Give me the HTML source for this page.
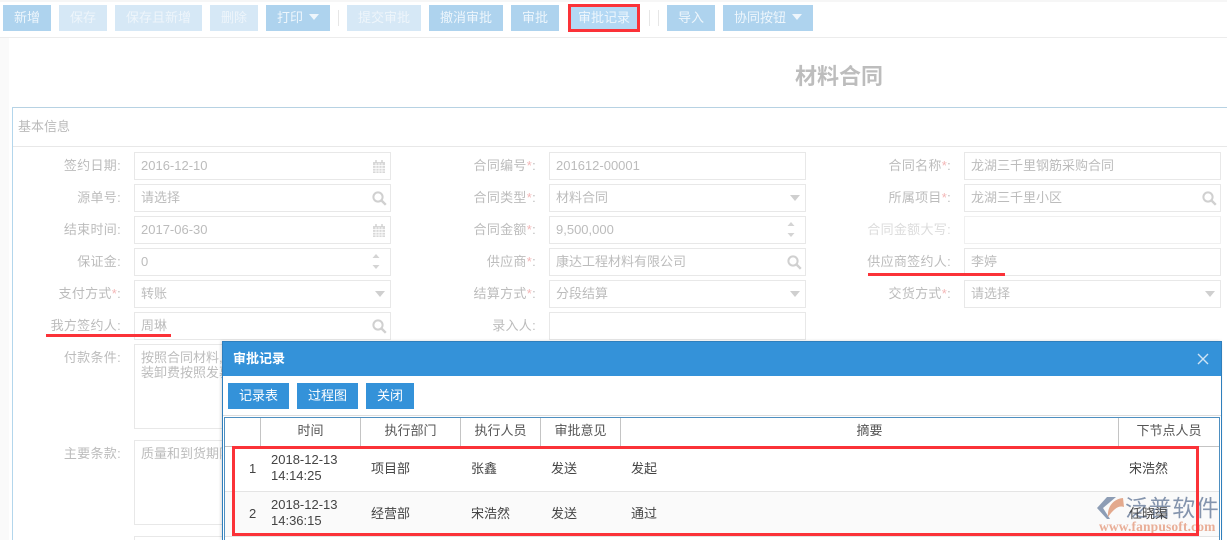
<!DOCTYPE html>
<html lang="zh"><head><meta charset="utf-8"><title>材料合同</title>
<style>
*{box-sizing:border-box;margin:0;padding:0}
html,body{width:1227px;height:540px;overflow:hidden;background:#fff}
body{position:relative;font-family:"Liberation Sans","Noto Sans CJK SC",sans-serif;font-size:13px;color:#bbb}
.a{position:absolute}
.b{position:absolute;top:5px;height:26px;line-height:26px;text-align:center;color:#eef6fc;background:#aed3ee;white-space:nowrap}
.l{background:#d6e8f6;color:#eef5fb}
.car{display:inline-block;width:0;height:0;border:5.5px solid transparent;border-top:6px solid #eef6fc;border-bottom:0;margin-left:6px;vertical-align:2px}
.sep{position:absolute;top:10px;width:1px;height:16px;background:#e6e6e6}
.lb{position:absolute;height:28px;line-height:27px;text-align:right;width:110px;color:#bcbcbc;white-space:nowrap;letter-spacing:.3px}
.lb i{font-style:normal;color:#f3b5b5}
.in{position:absolute;width:257px;height:28px;border:1px solid #e8e8e8;line-height:25px;padding-left:6px;color:#bcbcbc;background:#fff;white-space:nowrap;overflow:hidden}
.ta{line-height:15px;padding-top:5px;white-space:pre}
svg{position:absolute}
.db{position:absolute;top:383px;height:26px;line-height:26px;text-align:center;background:#3492d9;color:#fff}
.th{position:absolute;top:418px;height:28px;line-height:26px;text-align:center;color:#555;border-right:1px solid #c4c4c4;white-space:nowrap}
.td{position:absolute;color:#444;white-space:nowrap}
.r{position:absolute;background:#fb3238}
</style></head><body>
<div class="a" style="left:0;top:0;width:1227px;height:2px;background:#f6f6f6"></div>
<div class="a" style="left:0;top:37px;width:1227px;height:1px;background:#ececec"></div>
<div class="a" style="left:0;top:38px;width:9px;height:502px;background:#fafafa"></div>

<div class="b" style="left:3px;width:48px">新增</div>
<div class="b l" style="left:59px;width:48px">保存</div>
<div class="b l" style="left:115px;width:87px">保存且新增</div>
<div class="b l" style="left:210px;width:48px">删除</div>
<div class="b" style="left:266px;width:64px">打印<span class="car"></span></div>
<div class="sep" style="left:338px"></div>
<div class="b l" style="left:347px;width:74px">提交审批</div>
<div class="b" style="left:429px;width:74px">撤消审批</div>
<div class="b" style="left:511px;width:48px">审批</div>
<div class="b" style="left:569px;width:70px;background:#b3d8f4">审批记录</div>
<div class="a" style="left:568px;top:4px;width:72px;height:28px;border:3px solid #fb3238"></div>
<div class="sep" style="left:649px"></div>
<div class="sep" style="left:658px"></div>
<div class="b" style="left:667px;width:48px">导入</div>
<div class="b" style="left:723px;width:90px">协同按钮<span class="car"></span></div>

<div class="a" style="left:795px;top:62px;font-size:22px;font-weight:700;line-height:30px;color:#bdbdbd">材料合同</div>

<div class="a" style="left:12px;top:107px;width:1215px;height:1px;background:#b7d2e3"></div>
<div class="a" style="left:12px;top:107px;width:1px;height:433px;background:#b3d6ec"></div>
<div class="a" style="left:18px;top:118px;line-height:18px;color:#bababa">基本信息</div>
<div class="a" style="left:13px;top:146px;width:1214px;height:1px;background:#e8e8e8"></div>

<!-- column 1 -->
<div class="lb" style="left:11px;top:152px">签约日期:</div><div class="in" style="left:134px;top:152px">2016-12-10</div>
<div class="lb" style="left:11px;top:184px">源单号:</div><div class="in" style="left:134px;top:184px">请选择</div>
<div class="lb" style="left:11px;top:216px">结束时间:</div><div class="in" style="left:134px;top:216px">2017-06-30</div>
<div class="lb" style="left:11px;top:248px">保证金:</div><div class="in" style="left:134px;top:248px">0</div>
<div class="lb" style="left:11px;top:280px">支付方式<i>*</i>:</div><div class="in" style="left:134px;top:280px">转账</div>
<div class="lb" style="left:11px;top:312px">我方签约人:</div><div class="in" style="left:134px;top:312px">周琳</div>
<div class="lb" style="left:11px;top:344px">付款条件:</div><div class="in ta" style="left:134px;top:344px;height:85px">按照合同材料,
装卸费按照发募</div>
<div class="lb" style="left:11px;top:440px">主要条款:</div><div class="in ta" style="left:134px;top:440px;height:85px">质量和到货期限</div>
<div class="in" style="left:134px;top:536px;height:28px"></div>

<!-- column 2 -->
<div class="lb" style="left:426px;top:152px">合同编号<i>*</i>:</div><div class="in" style="left:549px;top:152px">201612-00001</div>
<div class="lb" style="left:426px;top:184px">合同类型<i>*</i>:</div><div class="in" style="left:549px;top:184px">材料合同</div>
<div class="lb" style="left:426px;top:216px">合同金额<i>*</i>:</div><div class="in" style="left:549px;top:216px">9,500,000</div>
<div class="lb" style="left:426px;top:248px">供应商<i>*</i>:</div><div class="in" style="left:549px;top:248px">康达工程材料有限公司</div>
<div class="lb" style="left:426px;top:280px">结算方式<i>*</i>:</div><div class="in" style="left:549px;top:280px">分段结算</div>
<div class="lb" style="left:426px;top:312px">录入人:</div><div class="in" style="left:549px;top:312px"></div>

<!-- column 3 -->
<div class="lb" style="left:841px;top:152px">合同名称<i>*</i>:</div><div class="in" style="left:964px;top:152px">龙湖三千里钢筋采购合同</div>
<div class="lb" style="left:841px;top:184px">所属项目<i>*</i>:</div><div class="in" style="left:964px;top:184px">龙湖三千里小区</div>
<div class="lb" style="left:841px;top:216px;color:#dcdcdc">合同金额大写:</div><div class="in" style="left:964px;top:216px;border-color:#f0f0f0"></div>
<div class="lb" style="left:841px;top:248px">供应商签约人:</div><div class="in" style="left:964px;top:248px">李婷</div>
<div class="lb" style="left:841px;top:280px">交货方式<i>*</i>:</div><div class="in" style="left:964px;top:280px">请选择</div>

<!-- calendar icons -->
<svg style="left:373px;top:160px" width="12" height="13" viewBox="0 0 12 13"><path d="M0 2h12v11H0z" fill="#d8d8d8"/><path d="M0 5.500h12M0 8.300h12M0 11h12M3 3v10M6 3v10M9 3v10" stroke="#fff" stroke-width=".8"/><path d="M3 0v3M9 0v3" stroke="#d0d0d0" stroke-width="1.400"/></svg>
<svg style="left:373px;top:224px" width="12" height="13" viewBox="0 0 12 13"><path d="M0 2h12v11H0z" fill="#d8d8d8"/><path d="M0 5.500h12M0 8.300h12M0 11h12M3 3v10M6 3v10M9 3v10" stroke="#fff" stroke-width=".8"/><path d="M3 0v3M9 0v3" stroke="#d0d0d0" stroke-width="1.400"/></svg>
<!-- search icons -->
<svg style="left:372px;top:191px" width="15" height="15" viewBox="0 0 15 15"><circle cx="6" cy="6" r="4.600" fill="none" stroke="#d0d0d0" stroke-width="2"/><path d="M9.500 9.500l4.300 4.300" stroke="#d0d0d0" stroke-width="2.400"/></svg>
<svg style="left:372px;top:319px" width="15" height="15" viewBox="0 0 15 15"><circle cx="6" cy="6" r="4.600" fill="none" stroke="#d0d0d0" stroke-width="2"/><path d="M9.500 9.500l4.300 4.300" stroke="#d0d0d0" stroke-width="2.400"/></svg>
<svg style="left:787px;top:255px" width="15" height="15" viewBox="0 0 15 15"><circle cx="6" cy="6" r="4.600" fill="none" stroke="#d0d0d0" stroke-width="2"/><path d="M9.500 9.500l4.300 4.300" stroke="#d0d0d0" stroke-width="2.400"/></svg>
<svg style="left:1202px;top:191px" width="15" height="15" viewBox="0 0 15 15"><circle cx="6" cy="6" r="4.600" fill="none" stroke="#d0d0d0" stroke-width="2"/><path d="M9.500 9.500l4.300 4.300" stroke="#d0d0d0" stroke-width="2.400"/></svg>
<!-- select carets -->
<svg style="left:374px;top:290px" width="12" height="8"><path d="M1 1h10L6 7z" fill="#cfcfcf"/></svg>
<svg style="left:789px;top:194px" width="12" height="8"><path d="M1 1h10L6 7z" fill="#cfcfcf"/></svg>
<svg style="left:789px;top:290px" width="12" height="8"><path d="M1 1h10L6 7z" fill="#cfcfcf"/></svg>
<svg style="left:1204px;top:290px" width="12" height="8"><path d="M1 1h10L6 7z" fill="#cfcfcf"/></svg>
<!-- spinners -->
<svg style="left:371px;top:253px" width="10" height="18"><path d="M1.500 5L5 1l3.500 4zM1.500 12L5 16l3.500-4z" fill="#d4d4d4"/></svg>
<svg style="left:786px;top:221px" width="10" height="18"><path d="M1.500 5L5 1l3.500 4zM1.500 12L5 16l3.500-4z" fill="#d4d4d4"/></svg>

<!-- red annotation underlines -->
<div class="r" style="left:46px;top:334px;width:125px;height:3px"></div>
<div class="r" style="left:868px;top:273px;width:137px;height:3px"></div>

<!-- dialog -->
<div class="a" style="left:222px;top:341px;width:1000px;height:199px;background:#fff;border:1px solid #2f7fbd;border-bottom:0;box-shadow:-1px 0 3px rgba(0,0,0,.15)"></div>
<div class="a" style="left:223px;top:342px;width:998px;height:34px;background:#3492d9"></div>
<div class="a" style="left:233px;top:350px;line-height:18px;color:#fff;font-weight:700">审批记录</div>
<svg style="left:1197px;top:353px" width="12" height="12"><path d="M1 1l10 10M11 1L1 11" stroke="#cfe4f5" stroke-width="1.400"/></svg>
<div class="db" style="left:228px;width:61px">记录表</div>
<div class="db" style="left:297px;width:61px">过程图</div>
<div class="db" style="left:366px;width:48px">关闭</div>
<div class="a" style="left:223px;top:415px;width:998px;height:1px;background:#dcdcdc"></div>
<div class="a" style="left:224px;top:417px;width:996px;height:123px;border:1px solid #4e8fc0;border-bottom:0"></div>

<div class="th" style="left:225px;width:36px"></div>
<div class="th" style="left:261px;width:100px">时间</div>
<div class="th" style="left:361px;width:100px">执行部门</div>
<div class="th" style="left:461px;width:80px">执行人员</div>
<div class="th" style="left:541px;width:80px">审批意见</div>
<div class="th" style="left:621px;width:498px">摘要</div>
<div class="th" style="left:1119px;width:100px;border-right:0">下节点人员</div>
<div class="a" style="left:225px;top:446px;width:994px;height:1px;background:#c4c4c4"></div>
<div class="a" style="left:225px;top:491px;width:994px;height:1px;background:#e4e4e4"></div>
<div class="a" style="left:225px;top:492px;width:994px;height:44px;background:#fafafa"></div>
<div class="a" style="left:225px;top:536px;width:994px;height:1px;background:#e4e4e4"></div>

<div class="td" style="left:249px;top:460px;line-height:18px">1</div>
<div class="td" style="left:271px;top:452px;line-height:16px">2018-12-13<br>14:14:25</div>
<div class="td" style="left:371px;top:460px;line-height:18px">项目部</div>
<div class="td" style="left:471px;top:460px;line-height:18px">张鑫</div>
<div class="td" style="left:551px;top:460px;line-height:18px">发送</div>
<div class="td" style="left:631px;top:460px;line-height:18px">发起</div>
<div class="td" style="left:1129px;top:460px;line-height:18px">宋浩然</div>

<div class="td" style="left:249px;top:505px;line-height:18px">2</div>
<div class="td" style="left:271px;top:497px;line-height:16px">2018-12-13<br>14:36:15</div>
<div class="td" style="left:371px;top:505px;line-height:18px">经营部</div>
<div class="td" style="left:471px;top:505px;line-height:18px">宋浩然</div>
<div class="td" style="left:551px;top:505px;line-height:18px">发送</div>
<div class="td" style="left:631px;top:505px;line-height:18px">通过</div>

<!-- watermark -->
<svg style="left:1097px;top:496px" width="30" height="24" viewBox="0 0 30 24"><path d="M10 1h9L6 12l7 11h-3L0 12z" fill="#8d9db5"/><path d="M11 21c-1-10 5-18 15-19l1 9c-6-2-11 3-16 10z" fill="#e3a98d"/></svg>
<div class="a" style="left:1125px;top:494px;font-size:23px;line-height:28px;font-weight:400;letter-spacing:.6px;color:#8494ad;white-space:nowrap;font-family:'Liberation Sans','Noto Sans CJK SC',sans-serif">泛普软件</div>
<div class="a" style="left:1099px;top:520px;font-size:13.500px;line-height:14px;font-weight:700;color:#e9ae97;letter-spacing:.15px;white-space:nowrap;font-family:'Liberation Serif',serif">www.fanpusoft.com</div>
<div class="td" style="left:1129px;top:505px;line-height:18px">任晓渠</div>

<!-- red box -->
<div class="a" style="left:232px;top:446px;width:967px;height:90px;border:3px solid #fb3238"></div>
</body></html>
